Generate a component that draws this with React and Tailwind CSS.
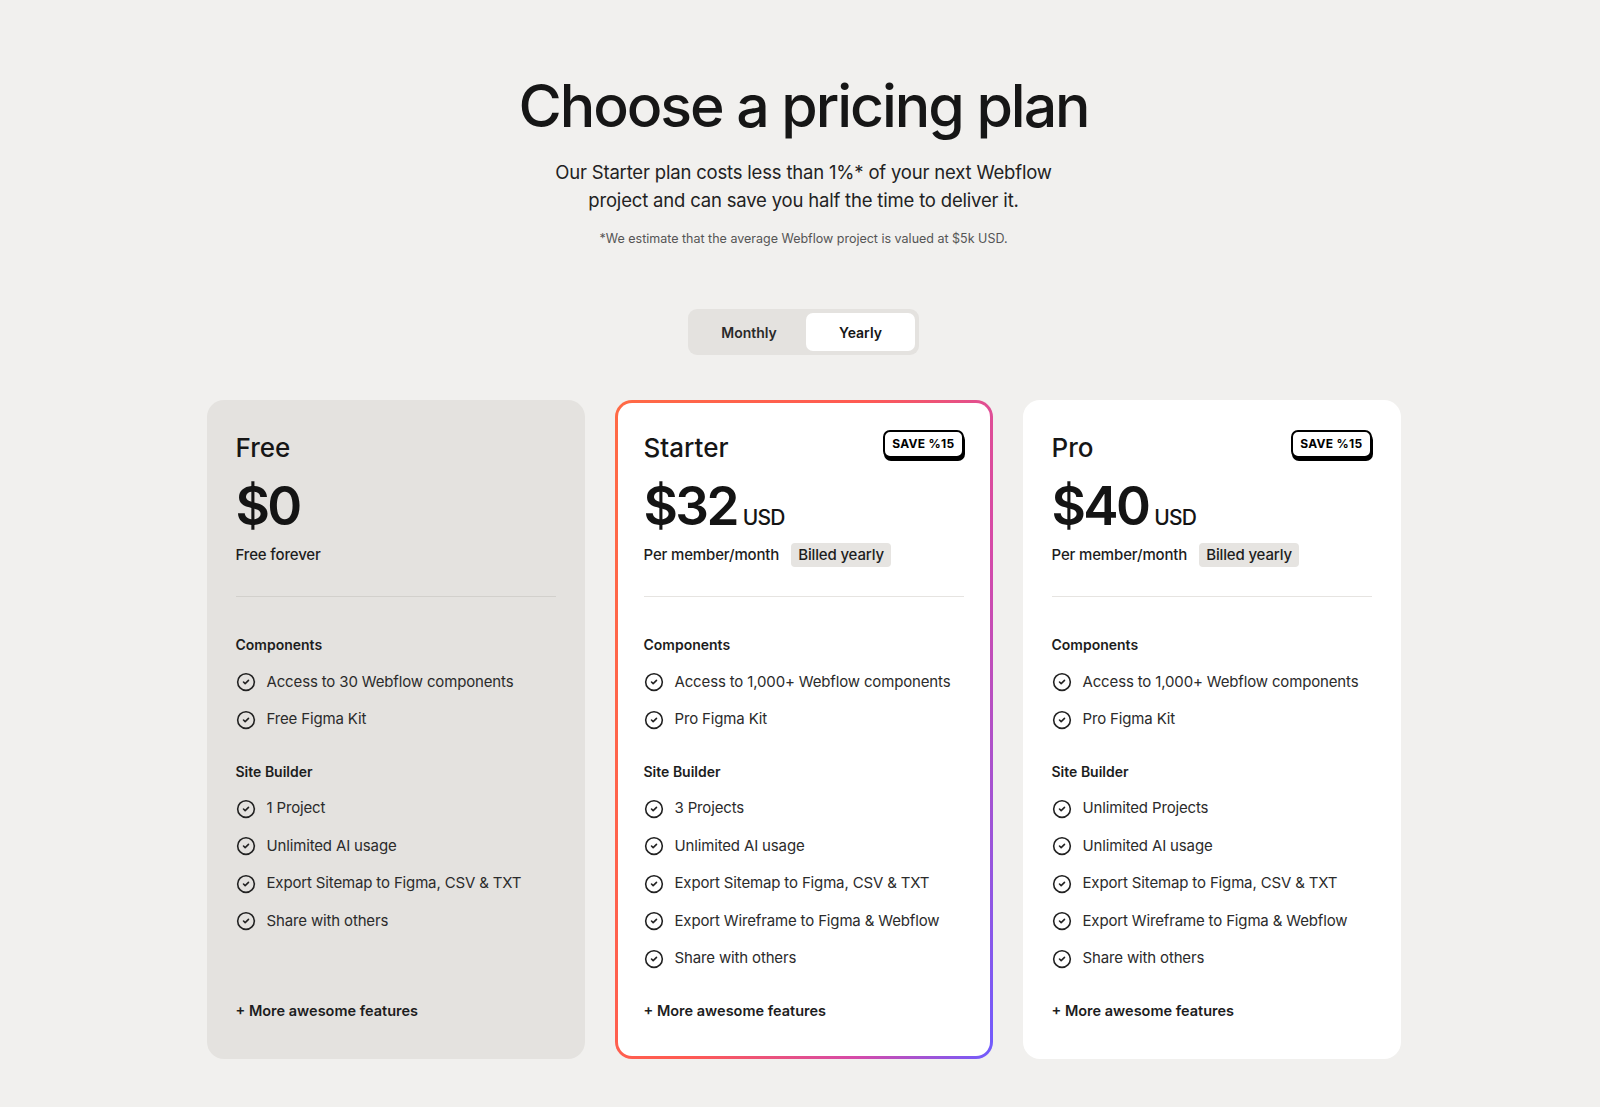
import { CircleCheck } from "lucide-react";

const plans = [
  {
    name: "Free",
    price: "$0",
    usd: false,
    note: "Free forever",
    save: false,
    components: ["Access to 30 Webflow components", "Free Figma Kit"],
    builder: ["1 Project", "Unlimited AI usage", "Export Sitemap to Figma, CSV & TXT", "Share with others"],
    variant: "muted",
  },
  {
    name: "Starter",
    price: "$32",
    usd: true,
    save: true,
    components: ["Access to 1,000+ Webflow components", "Pro Figma Kit"],
    builder: [
      "3 Projects",
      "Unlimited AI usage",
      "Export Sitemap to Figma, CSV & TXT",
      "Export Wireframe to Figma & Webflow",
      "Share with others",
    ],
    variant: "featured",
  },
  {
    name: "Pro",
    price: "$40",
    usd: true,
    save: true,
    components: ["Access to 1,000+ Webflow components", "Pro Figma Kit"],
    builder: [
      "Unlimited Projects",
      "Unlimited AI usage",
      "Export Sitemap to Figma, CSV & TXT",
      "Export Wireframe to Figma & Webflow",
      "Share with others",
    ],
    variant: "plain",
  },
];

function Feature({ children }) {
  return (
    <li className="flex items-center gap-[11px] h-6 text-[15px] tracking-[-0.01em] text-[#2b2b2b]">
      <CircleCheck className="w-5 h-5 shrink-0 text-[#222]" strokeWidth={1.9} />
      <span>{children}</span>
    </li>
  );
}

function PlanBody({ plan }) {
  const divider = plan.variant === "muted" ? "bg-[#d2d0cc]" : "bg-[#e6e4e1]";
  return (
    <div className="flex flex-col h-full">
      <div className="flex items-start justify-between">
        <h3 className="text-[26px] leading-[33px] font-medium text-[#161616]">{plan.name}</h3>
        {plan.save && (
          <span className="mt-[-1px] rounded-[7px] border-2 border-black bg-white px-[7px] py-[4px] text-[12px] font-bold leading-4 tracking-wide text-black shadow-[1px_3px_0_#000]">
            SAVE %15
          </span>
        )}
      </div>
      <div className="mt-[14px] flex items-baseline gap-[6px] h-[57px]">
        <span className="text-[53px] leading-[57px] font-semibold tracking-[-0.05em] text-[#141414]">{plan.price}</span>
        {plan.usd && <span className="text-[21px] font-medium tracking-[-0.04em] text-[#141414]">USD</span>}
      </div>
      <div className="mt-[9px] flex items-center gap-3 h-[22px] text-[15px] font-medium tracking-[-0.01em] text-[#1d1d1d]">
        {plan.note ? (
          <span>{plan.note}</span>
        ) : (
          <>
            <span>Per member/month</span>
            <span className="rounded-[4px] bg-[#e6e4e1] px-[7px] py-[1px]">Billed yearly</span>
          </>
        )}
      </div>
      <div className={`mt-[30px] h-px ${divider}`} />
      <div className="mt-[38px] text-[14px] leading-5 font-semibold text-[#1d1d1d]">Components</div>
      <ul className="mt-[15px] flex flex-col gap-[13.5px]">
        {plan.components.map((c) => (
          <Feature key={c}>{c}</Feature>
        ))}
      </ul>
      <div className="mt-[30px] text-[14px] leading-5 font-semibold text-[#1d1d1d]">Site Builder</div>
      <ul className="mt-[15px] flex flex-col gap-[13.5px]">
        {plan.builder.map((c) => (
          <Feature key={c}>{c}</Feature>
        ))}
      </ul>
      <div className="mt-auto pt-[30px] text-[14.5px] leading-5 font-semibold text-[#1d1d1d]">+ More awesome features</div>
    </div>
  );
}

function PlanCard({ plan }) {
  if (plan.variant === "featured") {
    return (
      <div className="rounded-[17px] p-[3px] bg-[linear-gradient(105deg,#ff6a45_0%,#ff5a52_45%,#d64aa8_75%,#6f5cff_100%)]">
        <div className="h-full rounded-[14px] bg-white pt-[28px] pb-[35px] px-[26px]">
          <PlanBody plan={plan} />
        </div>
      </div>
    );
  }
  const bg = plan.variant === "muted" ? "bg-[#e4e2df]" : "bg-white";
  return (
    <div className={`rounded-[17px] ${bg} pt-[31px] pb-[38px] px-[29px]`}>
      <PlanBody plan={plan} />
    </div>
  );
}

export default function App() {
  return (
    <div
      className="min-h-[1107px] bg-[#f1f0ee] text-[#161616]"
      style={{ fontFamily: "Inter, 'Noto Sans', sans-serif" }}
    >
      <div className="flex flex-col items-center pt-[73px] pl-[7px]">
        <h1 className="text-[59px] leading-[66px] font-medium tracking-[-0.035em] text-[#161616]">
          Choose a pricing plan
        </h1>
        <p className="mt-[19px] text-center text-[18.5px] leading-[28px] text-[#222] tracking-[-0.01em]">
          Our Starter plan costs less than 1%* of your next Webflow
          <br />
          project and can save you half the time to deliver it.
        </p>
        <p className="mt-[17px] text-[12.5px] leading-4 text-[#555]">
          *We estimate that the average Webflow project is valued at $5k USD.
        </p>
        <div className="mt-[62px] flex h-[46px] w-[231px] rounded-[9px] bg-[#e4e2df] p-1">
          <button className="flex-1 rounded-[7px] text-[14px] font-semibold text-[#2a2a2a]">Monthly</button>
          <button className="w-[109px] rounded-[7px] bg-white text-[14px] font-semibold text-[#161616]">Yearly</button>
        </div>
        <div className="mt-[45px] grid grid-cols-[378px_378px_378px] gap-[30px]">
          {plans.map((p) => (
            <PlanCard key={p.name} plan={p} />
          ))}
        </div>
      </div>
    </div>
  );
}
